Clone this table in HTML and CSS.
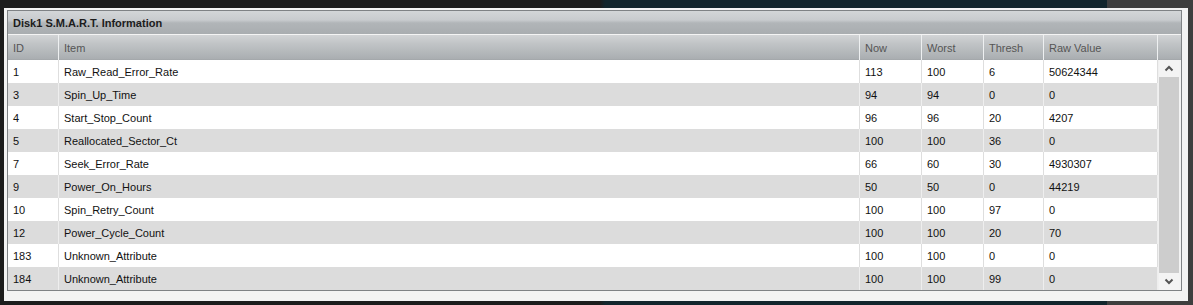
FILE: index.html
```html
<!DOCTYPE html>
<html>
<head>
<meta charset="utf-8">
<link rel="stylesheet" href="styles.css">
</head>
<body>
<div class="panel">
  <div class="box">
    <div class="title">Disk1 S.M.A.R.T. Information</div>
    <div class="head">
      <div class="hc">ID</div>
      <div class="hc">Item</div>
      <div class="hc">Now</div>
      <div class="hc">Worst</div>
      <div class="hc">Thresh</div>
      <div class="hc">Raw Value</div>
      <div class="hc last"></div>
    </div>
    <div class="body">
      <div class="rows">
        <div class="row odd"><div>1</div><div>Raw_Read_Error_Rate</div><div>113</div><div>100</div><div>6</div><div>50624344</div></div>
        <div class="row even"><div>3</div><div>Spin_Up_Time</div><div>94</div><div>94</div><div>0</div><div>0</div></div>
        <div class="row odd"><div>4</div><div>Start_Stop_Count</div><div>96</div><div>96</div><div>20</div><div>4207</div></div>
        <div class="row even"><div>5</div><div>Reallocated_Sector_Ct</div><div>100</div><div>100</div><div>36</div><div>0</div></div>
        <div class="row odd"><div>7</div><div>Seek_Error_Rate</div><div>66</div><div>60</div><div>30</div><div>4930307</div></div>
        <div class="row even"><div>9</div><div>Power_On_Hours</div><div>50</div><div>50</div><div>0</div><div>44219</div></div>
        <div class="row odd"><div>10</div><div>Spin_Retry_Count</div><div>100</div><div>100</div><div>97</div><div>0</div></div>
        <div class="row even"><div>12</div><div>Power_Cycle_Count</div><div>100</div><div>100</div><div>20</div><div>70</div></div>
        <div class="row odd"><div>183</div><div>Unknown_Attribute</div><div>100</div><div>100</div><div>0</div><div>0</div></div>
        <div class="row even"><div>184</div><div>Unknown_Attribute</div><div>100</div><div>100</div><div>99</div><div>0</div></div>
      </div>
      <div class="scroll">
        <div class="sbtn"><svg width="10" height="7" viewBox="0 0 10 7"><polyline points="1.5,5.5 5,2 8.5,5.5" fill="none" stroke="#555" stroke-width="2"/></svg></div>
        <div class="track"></div>
        <div class="sbtn"><svg width="10" height="7" viewBox="0 0 10 7"><polyline points="1.5,1.5 5,5 8.5,1.5" fill="none" stroke="#555" stroke-width="2"/></svg></div>
      </div>
    </div>
  </div>
</div>
</body>
</html>
```

FILE: styles.css
```css
html, body {
  margin: 0;
  padding: 0;
}
body {
  width: 1193px;
  height: 305px;
  overflow: hidden;
  background: linear-gradient(to right, #1c1c1c 0, #1c1c1c 600px, #12252c 605px, #12252c 1107px, #3e3e3e 1107px);
  font-family: "Liberation Sans", Arial, sans-serif;
}
.panel {
  margin: 8px 5px 0 4px;
  height: 293px;
  box-sizing: border-box;
  background: #f3f3f3;
  padding: 2px 6px 10px 3px;
}
.box {
  border: 1px solid #7f8285;
  display: flex;
  flex-direction: column;
}
.title {
  height: 23px;
  padding-left: 5px;
  display: flex;
  align-items: center;
  font-size: 11px;
  font-weight: bold;
  color: #1c1c1c;
  border-bottom: 1px solid #f4f4f4;
  background: linear-gradient(to bottom, #d3d6d8 0, #c8cbce 9px, #b1b5b8 12px, #a9adb0 23px);
}
.head, .row {
  display: grid;
  grid-template-columns: 51px 801px 62px 62px 60px 114px;
}
.head {
  grid-template-columns: 51px 801px 62px 62px 60px 114px 21px;
  height: 25px;
  background: linear-gradient(to bottom, #d2d4d6 0, #c2c5c7 8px, #aaaeb1 24px, #9fa3a6 25px);
}
.hc {
  display: flex;
  align-items: center;
  padding-left: 5px;
  font-size: 11px;
  color: #555;
  border-right: 1px solid #eef0f1;
}
.hc.last { border-right: none; }
.body {
  display: flex;
}
.rows {
  width: 1150px;
}
.row {
  height: 23px;
}
.row > div {
  display: flex;
  align-items: center;
  padding-left: 5px;
  font-size: 11px;
  color: #111;
  border-right: 1px solid #dedede;
}
.row.odd { background: #ffffff; }
.row.even { background: #dcdcdc; }
.row.even > div { border-right-color: #eeeeee; }
.scroll {
  width: 21px;
  display: flex;
  flex-direction: column;
  border-left: 1px solid #f0f0f0;
  box-sizing: border-box;
  background: #cdcdcd;
}
.sbtn {
  height: 17px;
  display: flex;
  align-items: center;
  justify-content: center;
  background: #f4f4f4;
}
.track {
  flex: 1;
  background: #cdcdcd;
}
```
